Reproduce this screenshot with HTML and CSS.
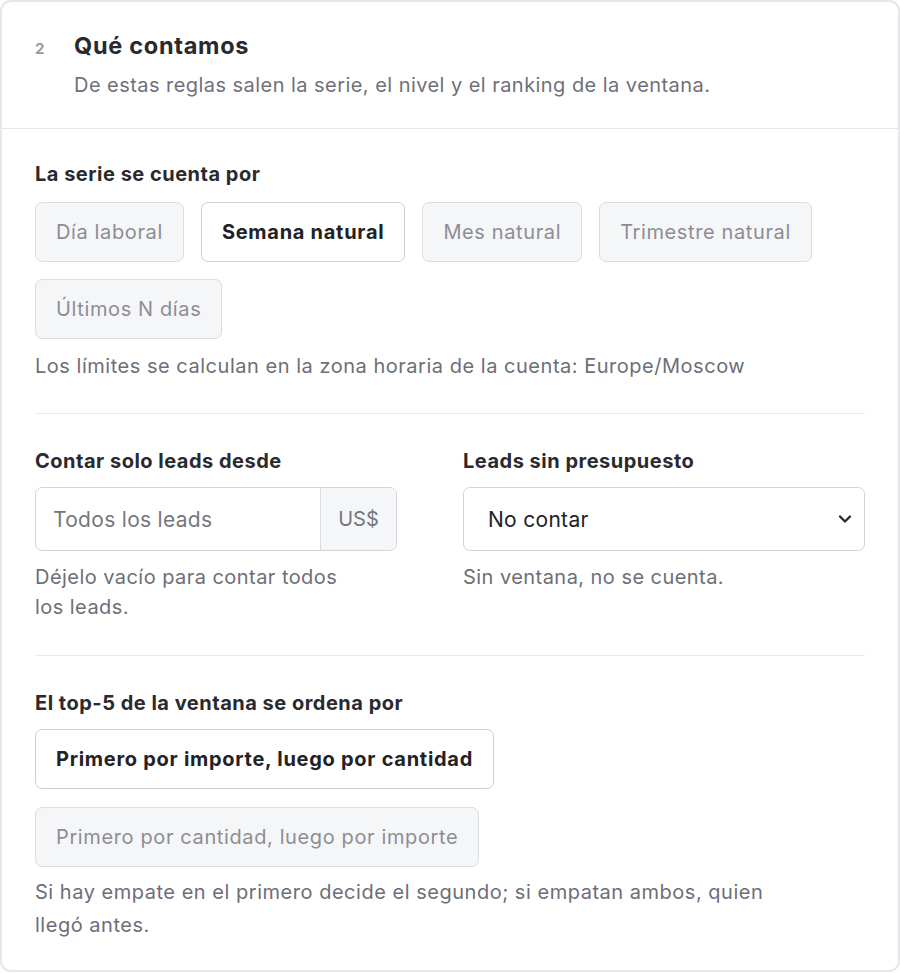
FILE: index.html
```html
<!DOCTYPE html>
<html lang="es">
<head>
<meta charset="utf-8">
<link rel="stylesheet" href="styles.css">
</head>
<body>
<section class="card">
  <header class="head">
    <span class="num">2</span>
    <div class="head-text">
      <h2 class="title">Qué contamos</h2>
      <p class="sub">De estas reglas salen la serie, el nivel y el ranking de la ventana.</p>
    </div>
  </header>
  <div class="body">
    <div class="group">
      <div class="label">La serie se cuenta por</div>
      <div class="chips">
        <button class="chip">Día laboral</button>
        <button class="chip on">Semana natural</button>
        <button class="chip">Mes natural</button>
        <button class="chip">Trimestre natural</button>
        <button class="chip">Últimos N días</button>
      </div>
      <p class="note">Los límites se calculan en la zona horaria de la cuenta: Europe/Moscow</p>
    </div>
    <hr class="sep">
    <div class="cols">
      <div class="col">
        <div class="label">Contar solo leads desde</div>
        <div class="inputgrp">
          <span class="ph">Todos los leads</span>
          <span class="addon">US$</span>
        </div>
        <p class="help narrow">Déjelo vacío para contar todos los leads.</p>
      </div>
      <div class="col">
        <div class="label">Leads sin presupuesto</div>
        <div class="select">
          <span>No contar</span>
          <svg class="chev" width="14" height="10" viewBox="0 0 14 10"><path d="M2 2.5 L7 7.5 L12 2.5" fill="none" stroke="#2a2a2e" stroke-width="2.4" stroke-linecap="round" stroke-linejoin="round"/></svg>
        </div>
        <p class="help">Sin ventana, no se cuenta.</p>
      </div>
    </div>
    <hr class="sep">
    <div class="group">
      <div class="label">El top-5 de la ventana se ordena por</div>
      <div class="stack">
        <button class="chip on">Primero por importe, luego por cantidad</button>
        <button class="chip">Primero por cantidad, luego por importe</button>
      </div>
      <p class="note last">Si hay empate en el primero decide el segundo; si empatan ambos, quien llegó antes.</p>
    </div>
  </div>
</section>
</body>
</html>
```
FILE: styles.css
```css
* { box-sizing: border-box; }
html, body { margin: 0; padding: 0; background: #ffffff; }
body {
  font-family: Inter, "Noto Sans", "Liberation Sans", sans-serif;
  color: #2a2a2e;
}
.card {
  width: 900px;
  height: 972px;
  border: 2px solid #e6e7ea;
  border-radius: 11px;
  background: #fff;
}
.head {
  display: flex;
  padding: 29px 34px 29px 33px;
  border-bottom: 1px solid #e6e7ea;
}
.num {
  width: 39px;
  font-size: 15px;
  font-weight: 700;
  color: #9a9aa2;
  line-height: 30px;
  padding-top: 3px;
}
.title {
  margin: 0;
  font-size: 23.5px;
  font-weight: 700;
  letter-spacing: 0.7px;
  line-height: 30px;
  color: #2a2a2e;
}
.sub {
  margin: 10px 0 0;
  font-size: 20px;
  letter-spacing: 0.45px;
  line-height: 28px;
  color: #707079;
}
.body { padding: 32px 33px 0 33px; }
.label {
  font-size: 20px;
  font-weight: 700;
  letter-spacing: 0.5px;
  line-height: 26px;
  color: #2a2a2e;
}
.chips {
  display: flex;
  flex-wrap: wrap;
  gap: 17px 17px;
  margin-top: 15px;
  width: 800px;
}
.chip {
  font-family: inherit;
  height: 60px;
  padding: 0 20px;
  font-size: 20px;
  letter-spacing: 0.62px;
  color: #8d8d95;
  background: #f5f6f8;
  border: 1.5px solid #dcdde1;
  border-radius: 7px;
  cursor: pointer;
}
.chip.on {
  background: #fff;
  color: #222226;
  font-weight: 700;
  letter-spacing: 0.72px;
  border-color: #cfd0d5;
}
.note {
  margin: 13px 0 0;
  font-size: 20px;
  letter-spacing: 0.52px;
  line-height: 28px;
  color: #6e6e77;
}
.sep {
  border: 0;
  border-top: 1px solid #e8e9ec;
  margin: 33px 0 34px;
}
.cols {
  display: grid;
  grid-template-columns: 362px 402px;
  column-gap: 66px;
}
.inputgrp {
  margin-top: 13px;
  display: flex;
  height: 64px;
  border: 1.5px solid #d3d4d8;
  border-radius: 7px;
  overflow: hidden;
}
.ph {
  flex: 1;
  display: flex;
  align-items: center;
  padding-left: 17px;
  font-size: 21px;
  letter-spacing: 0.3px;
  color: #76767e;
}
.addon {
  width: 76px;
  display: flex;
  align-items: center;
  justify-content: center;
  background: #f5f6f8;
  border-left: 1.5px solid #dcdde1;
  font-size: 20px;
  color: #76767e;
}
.select {
  margin-top: 13px;
  display: flex;
  align-items: center;
  justify-content: space-between;
  height: 64px;
  padding: 0 12px 0 24px;
  border: 1.5px solid #d3d4d8;
  border-radius: 7px;
  font-size: 21px;
  letter-spacing: 0.3px;
  color: #222226;
}
.help {
  margin: 11px 0 0;
  font-size: 20px;
  letter-spacing: 0.45px;
  line-height: 30px;
  color: #6e6e77;
}
.help.narrow { max-width: 325px; }
.stack {
  display: flex;
  flex-direction: column;
  align-items: flex-start;
  gap: 18px;
  margin-top: 13px;
}
.note.last { line-height: 33px; margin-top: 9px; width: 760px; }
```
